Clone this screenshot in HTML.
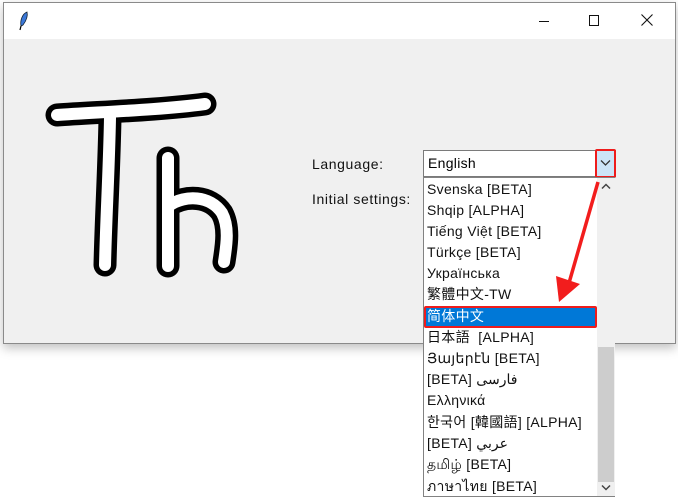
<!DOCTYPE html>
<html><head><meta charset="utf-8"><style>
*{margin:0;padding:0;box-sizing:border-box}
body{width:678px;height:500px;background:#fff;position:relative;overflow:hidden;font-family:"Liberation Sans","Noto Sans CJK SC",sans-serif;}
#win{position:absolute;left:3px;top:2px;width:673px;height:342px;border:1px solid #8a8a8a;background:#f0f0f0;box-shadow:0 4px 10px rgba(0,0,0,0.25)}
#title{position:absolute;left:0;top:0;width:100%;height:36px;background:#fff}
.lbl{position:absolute;font-size:14px;color:#111;letter-spacing:0.6px}
#combo{position:absolute;left:423px;top:150px;width:193px;height:27px;border:1px solid #7a7a7a;background:#fff}
#combo span{position:absolute;left:4px;top:4px;font-size:14px;letter-spacing:0.3px}
#btn{position:absolute;left:595px;top:149px;width:21px;height:29px;background:#cce4f7;border:2px solid #ee1c1c;border-radius:2px}
#list{position:absolute;left:423px;top:177px;width:192px;height:320px;border:1px solid #828282;background:#fff}
.it{position:absolute;left:3px;font-size:14px;color:#111;white-space:nowrap;height:21px;line-height:21px;letter-spacing:0.3px}
#sb{position:absolute;left:173px;top:0;width:18px;height:318px;background:#f0f0f0}
#thumb{position:absolute;left:1px;top:169px;width:16px;height:135px;background:#cdcdcd}
#sel{position:absolute;left:0;top:128px;width:173px;height:22px;background:#0078d7;border:2px solid #ee1c1c;border-radius:2px}
</style></head><body>
<div id="win">
 <div id="title">
  <svg style="position:absolute;left:14px;top:8px" width="12" height="20" viewBox="0 0 12 20"><path d="M9 1 C4 3 2 10 3 15 L5 14 C8 10 10 5 9 1Z" fill="#3b78d8" stroke="#123" stroke-width="0.8"/><path d="M3 15 L2 19" stroke="#000" stroke-width="1.2"/></svg>
  <div style="position:absolute;left:535px;top:18px;width:10px;height:1px;background:#111"></div>
  <div style="position:absolute;left:585px;top:12px;width:10px;height:11px;border:1px solid #111"></div>
  <svg style="position:absolute;left:637px;top:11px" width="12" height="12"><path d="M0.5 0.5 L11.5 11.5 M11.5 0.5 L0.5 11.5" stroke="#111" stroke-width="1.1"/></svg>
 </div>
</div>
<svg style="position:absolute;left:0;top:0" width="300" height="300">
 <g fill="none" stroke-linecap="round" stroke-linejoin="round">
  <g stroke="#000" stroke-width="23">
   <path d="M57 115 C100 112 160 110 205 104"/>
   <path d="M110 118 C109 170 106 220 105 265"/>
   <path d="M168 158 L168 266"/>
   <path d="M170 205 C185 195 210 195 222 213 C230 228 226 248 224 262"/>
  </g>
  <g stroke="#fff" stroke-width="12">
   <path d="M57 115 C100 112 160 110 205 104"/>
   <path d="M110 118 C109 170 106 220 105 265"/>
   <path d="M168 158 L168 266"/>
   <path d="M170 205 C185 195 210 195 222 213 C230 228 226 248 224 262"/>
  </g>
 </g>
</svg>
<div class="lbl" style="left:312px;top:156px">Language:</div>
<div class="lbl" style="left:312px;top:191px">Initial settings:</div>
<div id="combo"><span>English</span></div>
<div id="btn"><svg style="position:absolute;left:3px;top:8px" width="11" height="8"><path d="M1 1.5 L5.5 6 L10 1.5" stroke="#333" stroke-width="1.3" fill="none"/></svg></div>
<div id="list">
 <div id="sel"></div>
 <div class="it" style="top:1px">Svenska [BETA]</div>
 <div class="it" style="top:22px">Shqip [ALPHA]</div>
 <div class="it" style="top:43px">Tiếng Việt [BETA]</div>
 <div class="it" style="top:64px">Türkçe [BETA]</div>
 <div class="it" style="top:85px">Українська</div>
 <div class="it" style="top:106px">繁體中文-TW</div>
 <div class="it" style="top:128px;color:#fff">简体中文</div>
 <div class="it" style="top:149px">日本語 &nbsp;[ALPHA]</div>
 <div class="it" style="top:170px">Յայերէն [BETA]</div>
 <div class="it" style="top:191px">[BETA] فارسی</div>
 <div class="it" style="top:212px">Ελληνικά</div>
 <div class="it" style="top:234px">한국어 [韓國語] [ALPHA]</div>
 <div class="it" style="top:255px">[BETA] عربي</div>
 <div class="it" style="top:276px">தமிழ் [BETA]</div>
 <div class="it" style="top:298px">ภาษาไทย [BETA]</div>
 <div id="sb"><div id="thumb"></div>
  <svg style="position:absolute;left:4px;top:5px" width="10" height="7"><path d="M1 5.5 L5 1.5 L9 5.5" stroke="#444" stroke-width="1.5" fill="none"/></svg>
  <svg style="position:absolute;left:4px;top:306px" width="10" height="7"><path d="M1 1.5 L5 5.5 L9 1.5" stroke="#444" stroke-width="1.5" fill="none"/></svg>
 </div>
</div>
<svg style="position:absolute;left:0;top:0" width="678" height="500">
 <path d="M598 182 L569 283" stroke="#f21d1d" stroke-width="3.5" fill="none"/>
 <path d="M559 302 L556 276 L580 284 Z" fill="#f21d1d"/>
</svg>
</body></html>
